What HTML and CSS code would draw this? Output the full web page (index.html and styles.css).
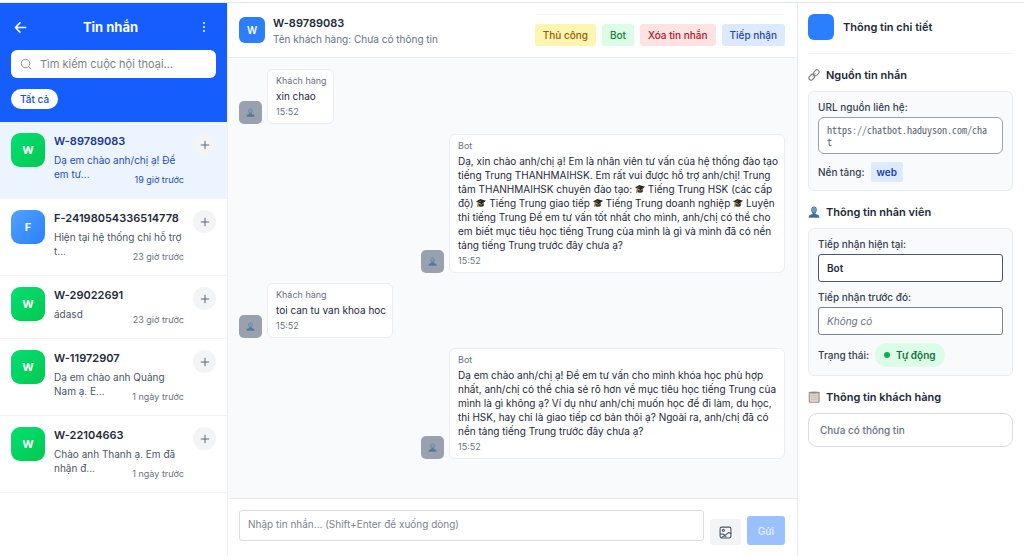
FILE: index.html
```html
<!DOCTYPE html>
<html lang="vi">
<head>
<meta charset="utf-8">
<meta name="viewport" content="width=device-width, initial-scale=1">
<title>Tin nhắn</title>
<link rel="stylesheet" href="styles.css">
</head>
<body>
<svg class="sprite" aria-hidden="true">
  <symbol id="person" viewBox="0 0 16 16">
    <path d="M1 15.500v-1.500c0-2 3-2.500 5-3.200V9.500C5 8.500 4.300 7 4.300 5 4.300 2.300 5.700.700 8 .700s3.700 1.600 3.700 4.300c0 2-.700 3.500-1.700 4.500v1.300c2 .700 5 1.200 5 3.200v1.500z" fill="#3f7196"/>
    <path d="M4.900 4.600C5 2.500 6.200 1.300 8 1.300s3 1.200 3.100 3.300C11.200 7 9.500 9 8 9S4.800 7 4.900 4.600z" fill="#6d9cbd"/>
  </symbol>
  <symbol id="cap" viewBox="0 0 16 16">
    <path d="M3.500 8v4.500c2 2 7 2 9 0V8L8 10.500z" fill="#40372f"/>
    <path d="M0 5.500 7 1.500l9 3-7 5.500z" fill="#28241f"/>
    <path d="M8 5 2.800 7.200v4" fill="none" stroke="#b98b35" stroke-width="1"/>
    <path d="M2 10.500h1.600l.400 4H1.500z" fill="#c89434"/>
  </symbol>
  <symbol id="plus" viewBox="0 0 24 24">
    <path d="M12 3v18M3 12h18" fill="none" stroke="currentColor" stroke-width="2.400" stroke-linecap="round"/>
  </symbol>
</svg>

<div class="app">
  <aside class="sidebar">
    <header class="side-head">
      <div class="side-bar">
        <button class="icon-btn icon-btn-back" type="button" aria-label="Quay lại">
          <svg class="i-back" viewBox="0 0 24 24"><path d="M21.500 12H3M11 3.500 2.500 12l8.500 8.500" fill="none" stroke="currentColor" stroke-width="2.800" stroke-linecap="round" stroke-linejoin="round"/></svg>
        </button>
        <h1 class="side-title">Tin nhắn</h1>
        <button class="icon-btn" type="button" aria-label="Tùy chọn">
          <svg class="i-dots" viewBox="0 0 12 12"><circle cx="6" cy="2" r="1" fill="currentColor"/><circle cx="6" cy="6" r="1" fill="currentColor"/><circle cx="6" cy="10" r="1" fill="currentColor"/></svg>
        </button>
      </div>
      <label class="search">
        <svg class="i-search" viewBox="0 0 24 24"><circle cx="11" cy="11" r="8.500" fill="none" stroke="currentColor" stroke-width="2"/><path d="m17.500 17.500 4.500 4.500" stroke="currentColor" stroke-width="2" stroke-linecap="round"/></svg>
        <input class="search-input" type="text" placeholder="Tìm kiếm cuộc hội thoại..." aria-label="Tìm kiếm cuộc hội thoại">
      </label>
      <button class="chip" type="button">Tất cả</button>
    </header>
    <ul class="list">
      <li class="item item-active">
        <span class="avatar avatar-green">W</span>
        <div class="item-body">
          <h2 class="item-name">W-89789083</h2>
          <div class="item-row"><p class="preview">Dạ em chào anh/chị ạ! Để em tư...</p><time class="ago">19 giờ trước</time></div>
        </div>
        <button class="add" type="button" aria-label="Thêm"><svg class="i-plus"><use href="#plus"/></svg></button>
      </li>
      <li class="item">
        <span class="avatar avatar-blue">F</span>
        <div class="item-body">
          <h2 class="item-name">F-24198054336514778</h2>
          <div class="item-row"><p class="preview">Hiện tại hệ thống chỉ hỗ trợ t...</p><time class="ago">23 giờ trước</time></div>
        </div>
        <button class="add" type="button" aria-label="Thêm"><svg class="i-plus"><use href="#plus"/></svg></button>
      </li>
      <li class="item">
        <span class="avatar avatar-green">W</span>
        <div class="item-body">
          <h2 class="item-name">W-29022691</h2>
          <div class="item-row"><p class="preview">ádasd</p><time class="ago">23 giờ trước</time></div>
        </div>
        <button class="add" type="button" aria-label="Thêm"><svg class="i-plus"><use href="#plus"/></svg></button>
      </li>
      <li class="item">
        <span class="avatar avatar-green">W</span>
        <div class="item-body">
          <h2 class="item-name">W-11972907</h2>
          <div class="item-row"><p class="preview">Dạ em chào anh Quảng Nam ạ. E...</p><time class="ago">1 ngày trước</time></div>
        </div>
        <button class="add" type="button" aria-label="Thêm"><svg class="i-plus"><use href="#plus"/></svg></button>
      </li>
      <li class="item">
        <span class="avatar avatar-green">W</span>
        <div class="item-body">
          <h2 class="item-name">W-22104663</h2>
          <div class="item-row"><p class="preview">Chào anh Thanh ạ. Em đã nhận đ...</p><time class="ago">1 ngày trước</time></div>
        </div>
        <button class="add" type="button" aria-label="Thêm"><svg class="i-plus"><use href="#plus"/></svg></button>
      </li>
    </ul>
  </aside>

  <main class="chat">
    <header class="chat-head">
      <span class="square">W</span>
      <div class="chat-who">
        <h2 class="chat-name">W-89789083</h2>
        <p class="chat-sub">Tên khách hàng: Chưa có thông tin</p>
      </div>
      <div class="actions">
        <button class="act act-yellow" type="button">Thủ công</button>
        <button class="act act-green" type="button">Bot</button>
        <button class="act act-red" type="button">Xóa tin nhắn</button>
        <button class="act act-blue" type="button">Tiếp nhận</button>
      </div>
    </header>
    <section class="messages">
      <article class="msg">
        <span class="face"><svg class="i-face"><use href="#person"/></svg></span>
        <div class="bubble"><p class="meta">Khách hàng</p><p class="text">xin chao</p><time class="meta">15:52</time></div>
      </article>
      <article class="msg msg-out">
        <span class="face"><svg class="i-face"><use href="#person"/></svg></span>
        <div class="bubble"><p class="meta">Bot</p><p class="text">Dạ, xin chào anh/chị ạ! Em là nhân viên tư vấn của hệ thống đào tạo tiếng Trung THANHMAIHSK. Em rất vui được hỗ trợ anh/chị! Trung tâm THANHMAIHSK chuyên đào tạo: <svg class="i-cap"><use href="#cap"/></svg> Tiếng Trung HSK (các cấp độ) <svg class="i-cap"><use href="#cap"/></svg> Tiếng Trung giao tiếp <svg class="i-cap"><use href="#cap"/></svg> Tiếng Trung doanh nghiệp <svg class="i-cap"><use href="#cap"/></svg> Luyện thi tiếng Trung Để em tư vấn tốt nhất cho mình, anh/chị có thể cho em biết mục tiêu học tiếng Trung của mình là gì và mình đã có nền tảng tiếng Trung trước đây chưa ạ?</p><time class="meta">15:52</time></div>
      </article>
      <article class="msg">
        <span class="face"><svg class="i-face"><use href="#person"/></svg></span>
        <div class="bubble"><p class="meta">Khách hàng</p><p class="text">toi can tu van khoa hoc</p><time class="meta">15:52</time></div>
      </article>
      <article class="msg msg-out">
        <span class="face"><svg class="i-face"><use href="#person"/></svg></span>
        <div class="bubble"><p class="meta">Bot</p><p class="text">Dạ em chào anh/chị ạ! Để em tư vấn cho mình khóa học phù hợp nhất, anh/chị có thể chia sẻ rõ hơn về mục tiêu học tiếng Trung của mình là gì không ạ? Ví dụ như anh/chị muốn học để đi làm, du học, thi HSK, hay chỉ là giao tiếp cơ bản thôi ạ? Ngoài ra, anh/chị đã có nền tảng tiếng Trung trước đây chưa ạ?</p><time class="meta">15:52</time></div>
      </article>
    </section>
    <form class="composer">
      <textarea class="compose-input" rows="1" placeholder="Nhập tin nhắn... (Shift+Enter để xuống dòng)" aria-label="Tin nhắn"></textarea>
      <button class="attach" type="button" aria-label="Gửi ảnh">
        <svg class="i-image" viewBox="0 0 24 24" fill="none" stroke="currentColor" stroke-width="2" stroke-linecap="round" stroke-linejoin="round"><rect x="2" y="2" width="20" height="20" rx="3"/><circle cx="8" cy="8" r="2"/><path d="M3 15c4-1 8 1 10 5M13 16l5-4 4 2M5 21l8-5"/></svg>
      </button>
      <button class="send" type="button" disabled>Gửi</button>
    </form>
  </main>

  <aside class="details">
    <header class="det-head"><span class="square"></span><h2 class="det-title">Thông tin chi tiết</h2></header>
    <section class="det-sec">
      <h3 class="sec-title">
        <svg class="i-sec" viewBox="0 0 16 16" fill="none" stroke-width="1.500"><rect x="6.800" y="2.200" width="8.500" height="5.600" rx="2.800" transform="rotate(-48 11 5)" stroke="#8e8886"/><rect x=".800" y="8.200" width="8.500" height="5.600" rx="2.800" transform="rotate(-48 5 11)" stroke="#77706e"/><path d="m6 10 4-4.500" stroke="#a39b97"/></svg>
        Nguồn tin nhắn
      </h3>
      <div class="card">
        <div class="field"><label class="lab" for="url">URL nguồn liên hệ:</label>
        <textarea class="box box-url" id="url" rows="2" readonly>https://chatbot.haduyson.com/chat</textarea></div>
        <div class="inline"><span class="lab">Nền tảng:</span><span class="tag">web</span></div>
      </div>
    </section>
    <section class="det-sec">
      <h3 class="sec-title"><svg class="i-sec"><use href="#person"/></svg>Thông tin nhân viên</h3>
      <div class="card">
        <div class="field"><label class="lab" for="cur">Tiếp nhận hiện tại:</label>
        <input class="box box-current" id="cur" type="text" value="Bot" readonly></div>
        <div class="field"><label class="lab" for="prev">Tiếp nhận trước đó:</label>
        <input class="box box-prev" id="prev" type="text" value="Không có" readonly></div>
        <div class="inline"><span class="lab">Trạng thái:</span><span class="pill"><i class="dot"></i>Tự động</span></div>
      </div>
    </section>
    <section class="det-sec">
      <h3 class="sec-title">
        <svg class="i-sec" viewBox="0 0 16 16"><rect x="1" y="1" width="14.500" height="14.500" rx="1" fill="#a28c7f"/><rect x="2.500" y="3" width="11.500" height="11.500" fill="#dcd5d2"/><path d="M5 1h6.500v2.300H5z" fill="#8d8b8c"/><path d="M4 6h8.500M4 8.500h8.500M4 11h8.500" stroke="#bdb3b0" stroke-width=".800"/></svg>
        Thông tin khách hàng
      </h3>
      <p class="empty">Chưa có thông tin</p>
    </section>
  </aside>
</div>
</body>
</html>
```

FILE: styles.css
```css
* { box-sizing: border-box; margin: 0; padding: 0; }

body {
  padding-top: 2px;
  background: #fff;
  color: #1e2939;
  font: 400 10px/14px Inter, "Liberation Sans", sans-serif;
}

button, input, textarea { font: inherit; color: inherit; border: 0; background: none; }
textarea { display: block; resize: none; overflow: hidden; }
svg { display: block; flex: none; }
.sprite { position: absolute; width: 0; height: 0; }

.app {
  display: grid;
  grid-template-columns: 227px minmax(0, 1fr) 227px;
  min-height: calc(100vh - 2px);
  border-top: 1px solid #e2e5ea;
}

/* Conversation list */
.side-head { padding: 11px 11px 13px; background: #155dfc; color: #fff; }
.side-bar { display: flex; align-items: center; justify-content: space-between; height: 26px; margin-bottom: 10px; }
.icon-btn { display: grid; place-items: center; width: 24px; height: 24px; }
.icon-btn-back { width: 18px; }
.side-title { font-size: 13px; line-height: 20px; font-weight: 700; }
.i-back { width: 13px; height: 13px; }
.i-dots { width: 12px; height: 12px; }
.search { display: flex; align-items: center; gap: 8px; height: 28px; margin-bottom: 11px; padding: 0 9px; border-radius: 6px; background: #fff; color: #8b9099; }
.i-search { width: 12px; height: 12px; }
.search-input { flex: 1; min-width: 0; font-size: 11px; outline: 0; }
.search-input::placeholder, .compose-input::placeholder { color: #7d828b; opacity: 1; }
.chip { display: block; height: 20px; padding: 0 9px; border-radius: 10px; background: #fff; color: #1d4fc4; font-weight: 500; }

.list { list-style: none; }
.item { display: flex; align-items: flex-start; gap: 9px; padding: 11px; border-bottom: 1px solid #f1f3f6; }
.item-active { background: #ebf4ff; }
.avatar { display: grid; place-items: center; flex: none; width: 34px; height: 34px; border-radius: 9px; color: #fff; font-size: 11px; font-weight: 700; }
.avatar-green { background: linear-gradient(135deg, #05df72, #00c950); }
.avatar-blue { background: linear-gradient(135deg, #51a2ff, #2b7fff); }
.item-body { flex: 1; min-width: 0; }
.item-name { margin-bottom: 3px; font-size: 11px; line-height: 17px; font-weight: 600; white-space: nowrap; }
.item-row { display: grid; }
.preview { grid-area: 1 / 1; margin-bottom: 6px; color: #4a5565; }
.ago { grid-area: 1 / 1; place-self: end; color: #6a7282; font-size: 9px; line-height: 14px; }
.item-active .item-name { color: #1c398e; }
.item-active .preview, .item-active .ago { color: #1d4fae; }
.add { display: grid; place-items: center; flex: none; width: 23px; height: 23px; border-radius: 50%; background: #f3f4f6; color: #5d6675; }
.i-plus { width: 10px; height: 10px; }

/* Conversation */
.chat { display: flex; flex-direction: column; min-width: 0; border-left: 1px solid #eceff3; background: #f8fafc; }
.chat-head { display: flex; align-items: center; gap: 8px; padding: 11px 12px 11px 11px; border-bottom: 1px solid #e8ebef; background: #fff; }
.square { display: grid; place-items: center; flex: none; width: 26px; height: 26px; border-radius: 6px; background: #2b7fff; color: #fff; font-weight: 600; }
.chat-who { flex: 1; min-width: 0; }
.chat-name { font-size: 11px; line-height: 17px; font-weight: 600; }
.chat-sub { color: #6a7282; }
.actions { display: flex; gap: 6px; padding-top: 9px; border-top: 1px solid #f6f7f9; }
.act { height: 22px; padding: 0 8px; border-radius: 3px; font-weight: 500; white-space: nowrap; }
.act-yellow { background: #fef6b0; color: #9a5b0c; }
.act-green { background: #dcfce7; color: #13803c; }
.act-red { background: #ffe2e2; color: #b0182a; }
.act-blue { background: #dbeafe; color: #1f45b8; }

.messages { flex: 1; display: flex; flex-direction: column; gap: 10px; padding: 11px 12px 11px 11px; }
.msg { display: flex; align-items: flex-end; gap: 5px; max-width: calc(100% * 2 / 3); }
.msg-out { align-self: flex-end; }
.face { display: grid; place-items: center; flex: none; width: 23px; height: 23px; border-radius: 5px; background: #99a1af; }
.i-face { width: 9px; height: 9px; opacity: .8; }
.bubble { padding: 5px 6px 5px 8px; border: 1px solid #eaedf1; border-radius: 6px; background: #fff; }
.msg-out .bubble { padding-right: 4px; }
.meta { display: block; color: #6a7282; font-size: 9px; line-height: 12px; }
.text { margin: 2px 0 3px; }
.i-cap { display: inline-block; width: 10px; height: 10px; vertical-align: -1px; }

.composer { display: flex; align-items: flex-end; gap: 6px; padding: 11px 12px 11px 11px; border-top: 1px solid #e8ebef; background: #fff; }
.compose-input { flex: 1; min-width: 0; height: 31px; margin-bottom: 4px; padding: 6px 8px; border: 1px solid #d9dde3; border-radius: 3px; outline: 0; }
.attach { display: grid; place-items: center; width: 31px; height: 26px; border-radius: 3px; background: #f3f4f6; color: #4a5565; }
.i-image { width: 13px; height: 13px; }
.send { height: 29px; padding: 0 11px; border-radius: 3px; background: #9ac1fe; color: #e9f2ff; font-weight: 500; }

/* Details */
.details { padding: 11px 11px 11px 10px; border-left: 1px solid #e8ebef; background: #fff; }
.det-head { display: flex; align-items: center; gap: 9px; padding-bottom: 13px; border-bottom: 1px solid #f3f4f6; }
.det-title { font-size: 11px; line-height: 16px; font-weight: 600; }
.det-sec { margin-top: 13px; }
.sec-title { display: flex; align-items: center; gap: 6px; margin-bottom: 8px; font-size: 11px; line-height: 16px; font-weight: 600; }
.i-sec { width: 12px; height: 12px; }
.card { display: flex; flex-direction: column; gap: 8px; padding: 8px 9px; border: 1px solid #e8ebf0; border-radius: 6px; background: #f8fafc; }
.lab { color: #364153; font-weight: 500; }
.field { display: flex; flex-direction: column; gap: 3px; }
.box { width: 100%; height: 28px; padding: 0 8px; border: 1px solid #7e8590; border-radius: 3px; background: #fff; outline: 0; }
.box-url { height: 37px; padding: 6px 14px 6px 8px; border-color: #99a1af; border-radius: 6px; color: #5b6472; font: 10px/12px "Noto Sans Mono CJK SC", "Liberation Mono", monospace; word-break: break-all; }
.box-current { border-color: #4a5565; font-weight: 600; }
.box-prev { color: #6a7282; font-style: italic; }
.inline { display: flex; align-items: center; gap: 6px; }
.tag { padding: 3px 6px; border-radius: 3px; background: #dbeafe; color: #1c3fa8; font-weight: 600; }
.pill { display: flex; align-items: center; gap: 6px; height: 24px; padding: 0 9px; border-radius: 12px; background: #dcfce7; color: #13703a; font-weight: 600; }
.dot { width: 6px; height: 6px; border-radius: 50%; background: #00b84a; }
.empty { padding: 8px 11px; border: 1px solid #d9dce1; border-radius: 9px; color: #6a7282; font-weight: 500; line-height: 16px; }
```
